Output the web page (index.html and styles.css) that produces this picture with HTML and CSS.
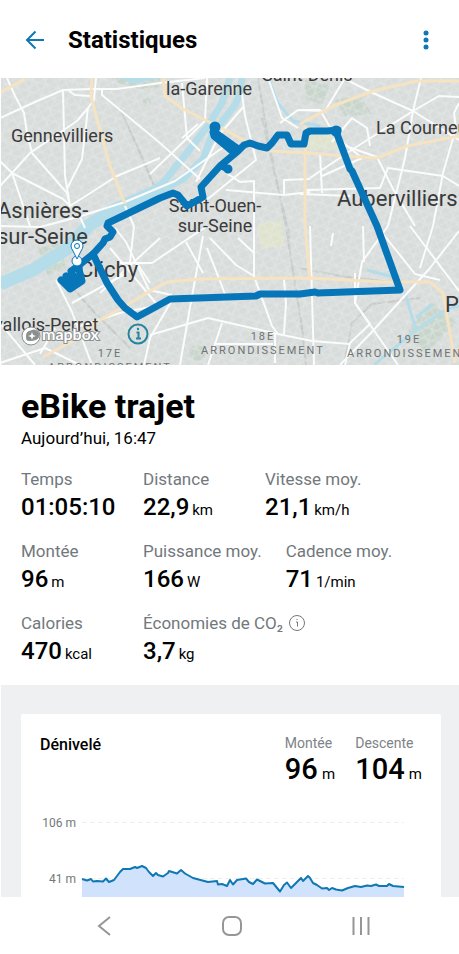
FILE: index.html
```html
<!DOCTYPE html>
<html lang="fr">
<head>
  <meta charset="UTF-8" />
  <meta name="viewport" content="width=device-width, initial-scale=1.0" />
  <title>Statistiques</title>
  <link rel="stylesheet" href="styles.css">
</head>
<body>
  <header class="topbar">
    <button class="icon-btn" aria-label="Retour">
      <svg width="20" height="20" viewBox="0 0 20 20"><path d="M20 10H3M11.500 1.500L3 10l8.500 8.500" /></svg>
    </button>
    <h1 class="topbar-title">Statistiques</h1>
    <button class="icon-btn menu-btn" aria-label="Menu">
      <svg width="6" height="20" viewBox="0 0 6 20"><circle cx="3" cy="3" r="2.500" /><circle cx="3" cy="10" r="2.500" /><circle cx="3" cy="17" r="2.500" /></svg>
    </button>
  </header>

  <main class="content">
    <svg class="map" viewBox="1 0 458 287" role="img" aria-label="Carte du trajet">
      <defs>
        <pattern id="streetsA" width="9" height="7" patternUnits="userSpaceOnUse" patternTransform="rotate(-28)">
          <path d="M0 1H9M2 0V7" class="street" />
        </pattern>
        <pattern id="streetsB" width="13" height="11" patternUnits="userSpaceOnUse" patternTransform="rotate(17)">
          <path d="M0 4H13M6 0V11" class="street" />
        </pattern>
      </defs>
      <rect class="land" x="0" y="0" width="460" height="287" />

      <!-- parks and rail yards -->
      <g class="park">
        <path d="M112 0H160V9L140 11L120 6Z" />
        <path d="M305 2L330 8L322 26L306 22Z" />
        <path d="M335 22L360 18L372 36L345 38Z" />
        <path d="M408 252L432 225L456 244L425 276Z" />
        <path d="M38 170L60 165L66 190L48 198Z" />
        <circle cx="197" cy="275" r="8" />
        <circle cx="147" cy="24" r="4" />
      </g>
      <path class="field" d="M258 146L282 142L284 168L260 171ZM303 55L332 56L340 71L306 72Z" />
      <path class="rail" d="M258 0L268 60L276 100L286 148L294 200L302 250L306 287M262 40L278 110L290 160M120 30L140 75L155 110M68 205L95 235L130 270M344 287L352 245L372 226L420 220M300 190L340 198L400 205" />
      <rect x="0" y="0" width="460" height="287" fill="url(#streetsA)" />
      <rect x="0" y="0" width="460" height="287" fill="url(#streetsB)" />

      <!-- water -->
      <g class="water">
        <path class="seine-arm" d="M230 0L222 25L207 49L190 71L163 105L150 114M242 0L240 15L235 27L212 57L203 81L183 101L165 110" />
        <path class="seine" d="M168 109L150 116L110 134L88 148L67 171L33 192L0 206" />
        <path class="canal" d="M268 0L278 25L293 43L320 48M405 215L416 252L374 287M416 252L447 231L459 228M416 240L432 226M367 192L397 200" />
        <path class="pond" d="M121 1L133 5L150 2L157 0H122Z" />
      </g>

      <!-- secondary roads -->
      <g class="road">
        <path d="M7 0L15 18L24 35L27 55L32 75L67 115L70 128" />
        <path d="M0 40L35 24L63 12L90 11L117 11L160 5L205 0" />
        <path d="M63 12L65 98L70 128M69 13L75 17L90 18M96 0L94 22L88 30L82 81L67 111" />
        <path d="M88 30L77 43L30 75L12 95L0 108M0 83L12 95L30 148M12 95L63 121L70 128L117 98L160 80" />
        <path d="M102 12L102 17L160 65L200 101" />
        <path d="M0 148L40 149L78 139L125 124L175 103L225 68M80 139L85 150M125 128L134 148L130 184" />
        <path d="M182 5L187 60L200 73M207 0L205 43L150 96M198 46L182 60" />
        <path d="M242 16L245 38L256 82L204 124M244 28L220 56L196 104" />
        <path d="M228 96L240 104L254 103L254 192M226 112L284 117L284 102L310 101M284 117L310 114" />
        <path d="M268 0L282 40L298 50M280 45L298 32L325 33L345 0" />
        <path d="M300 32L320 32L340 66L377 79L393 111L415 148M343 0L373 15L413 33L459 62" />
        <path d="M421 0L413 33L405 80L388 148L362 184L355 225L398 287" />
        <path d="M413 33L439 18L459 19M459 25L454 35L456 50L443 95L433 148L420 190M413 33L350 73L310 100" />
        <path d="M306 112L380 110L388 90L443 98L459 108M320 75L322 115M332 64L352 40L367 50L370 68" />
        <path d="M334 57L362 80L322 98M300 116L350 118M363 148L364 184" />
        <path d="M372 142L415 196L440 202M410 148L459 213M459 153L430 190L370 256L340 287" />
        <path d="M310 148L314 287M333 155L331 168M355 195L355 225L370 246L350 265L345 287" />
        <path d="M115 150L126 164L149 212L172 217M120 185L152 185L195 156L208 148M186 164L203 195" />
        <path d="M203 158L189 235L180 287M207 170L225 216M210 160L236 187L254 198L272 248L278 256" />
        <path d="M254 148L254 198M284 201L286 225L284 256M150 257L208 240L278 256L312 263L350 266" />
        <path d="M172 222L150 260L144 287M222 245L208 287M275 256L275 285M216 266L273 266" />
        <path d="M56 202L72 234L92 287M72 225L125 196M100 215L160 160M80 248L120 235L165 226M137 185L150 205M110 170L160 230" />
        <path d="M0 245L35 287M0 285L45 270L80 287M40 276L55 250M238 160L254 175" />
      </g>

      <!-- main roads -->
      <g class="main-road">
        <path d="M1 14L25 1" />
        <path d="M92 0L91 18L97 41L110 88L125 126" />
        <path d="M163 0L165 18L183 31L217 48L250 65L270 73L310 75L343 78L377 80L407 68L459 58" />
        <path d="M300 46L333 28L373 13L417 3L459 3" />
        <path d="M305 48L305 148L310 202" />
        <path d="M43 279L80 259L100 242L127 227L150 213L167 204L200 201L310 200L383 204L430 204L443 215L455 285" />
      </g>

      <g class="place">
        <text x="166" y="17" class="town">la-Garenne</text>
        <text x="262" y="3" class="town">Saint-Denis</text>
        <text x="11" y="64" class="town">Gennevilliers</text>
        <text x="376" y="56" class="town">La Courneuve</text>
        <text x="-3" y="140" class="city">Asnières-</text>
        <text x="-3" y="166" class="city">sur-Seine</text>
        <text x="215" y="134" class="town middle">Saint-Ouen-</text>
        <text x="215" y="154" class="town middle">sur-Seine</text>
        <text x="337" y="128" class="city">Aubervilliers</text>
        <text x="79" y="199" class="city">Clichy</text>
        <text x="445" y="234" class="city">Pantin</text>
        <text x="-6" y="253" class="town">vallois-Perret</text>
      </g>
      <g class="district">
        <text x="110" y="279">17E</text>
        <text x="110" y="293">ARRONDISSEMENT</text>
        <text x="263" y="262">18E</text>
        <text x="263" y="276">ARRONDISSEMENT</text>
        <text x="409" y="265">19E</text>
        <text x="409" y="279">ARRONDISSEMENT</text>
      </g>

      <!-- recorded track -->
      <g class="track">
        <path d="M215 49L213 54L214 58L232 73L238 73L244 67L250 65L258 68L267 70L272 65L278 57L287 57L291 66L304 66L306 55L310 53L327 53L338 52L337 56L350 91L352 93L377 148L400 212L318 215L315 214L300 216L260 216L256 218L170 221L150 232L137 239L125 230L118 222L107 205L93 176L103 165L105 161L110 159L113 154L107 148L108 145L160 120L173 115L178 117L187 128L203 119L201 109L220 88L238 73" />
        <path d="M93 176L78 188L71 193L76 203M78 188L82 203L70 211L61 202M66 198L70 206M216 55L237 70M228 91L222 88" />
        <circle cx="215" cy="49" r="2" /><circle cx="228" cy="91" r="1" /><circle cx="336" cy="53" r="2" />
      </g>

      <g class="pin">
        <circle cx="77" cy="183" r="5" />
        <path d="M77 181L73 173Q71 170 71 168A6 6 0 0 1 83 168Q83 170 81 173Z" />
        <circle cx="77" cy="168" r="2.500" />
      </g>

      <g class="attribution">
        <circle cx="31" cy="258" r="9" />
        <path d="M27 262Q25 253 31 253A5 5 0 1 1 34 262Q31 263 27 262Z" />
        <path class="spark" d="M32 254L33 257L36 258L33 259L32 262L31 259L28 258L31 257Z" />
        <text x="42" y="262">mapbox</text>
      </g>
      <g class="map-info">
        <circle cx="138" cy="256" r="9.500" />
        <path d="M136.500 254.500H138.500V260M136 260.500H141" />
        <circle class="dot" cx="138" cy="251" r="1.200" />
      </g>
    </svg>

    <section class="summary">
      <h2 class="ride-name">eBike trajet</h2>
      <p class="ride-date">Aujourd’hui, 16:47</p>

      <div class="stats">
        <div class="stat-row">
          <div class="stat"><div class="label">Temps</div><div class="value">01:05:10</div></div>
          <div class="stat"><div class="label">Distance</div><div class="value">22,9 <span class="unit">km</span></div></div>
          <div class="stat"><div class="label">Vitesse moy.</div><div class="value">21,1 <span class="unit">km/h</span></div></div>
        </div>
        <div class="stat-row">
          <div class="stat"><div class="label">Montée</div><div class="value">96 <span class="unit">m</span></div></div>
          <div class="stat"><div class="label">Puissance moy.</div><div class="value">166 <span class="unit">W</span></div></div>
          <div class="stat"><div class="label">Cadence moy.</div><div class="value">71 <span class="unit">1/min</span></div></div>
        </div>
        <div class="stat-row">
          <div class="stat"><div class="label">Calories</div><div class="value">470 <span class="unit">kcal</span></div></div>
          <div class="stat">
            <div class="label">Économies de CO₂
              <button class="info-btn" aria-label="Informations CO₂">
                <svg width="16" height="16" viewBox="0 0 16 16"><circle cx="8" cy="8" r="7.500" /><path d="M7 7H8.500V11.500M8 4V5" /></svg>
              </button>
            </div>
            <div class="value">3,7 <span class="unit">kg</span></div>
          </div>
        </div>
      </div>
    </section>

    <section class="details">
      <article class="card">
        <div class="card-head">
          <h3 class="card-title">Dénivelé</h3>
          <div class="totals">
            <div><div class="total-label">Montée</div><div class="total">96 <span class="unit">m</span></div></div>
            <div><div class="total-label">Descente</div><div class="total">104 <span class="unit">m</span></div></div>
          </div>
        </div>
        <svg class="chart" viewBox="0 0 382 140" role="img" aria-label="Profil du dénivelé">
          <path class="grid" d="M42 21.500H364M42 77.500H364" />
          <path class="area" d="M42 78L47 79L51 78L53 81L63 80L66 78L69 81L74 79L80 71L83 68L90 68L95 66L97 67L102 65L106 67L113 75L116 72L118 74L123 75L129 70L137 72L141 69L145 72L153 77L168 81L177 80L178 83L187 85L190 79L193 83L197 79L206 78L209 81L213 83L217 78L225 83L233 82L240 90L247 82L251 87L261 77L263 80L268 75L273 82L282 87L290 88L300 89L308 87L315 85L327 85L336 84L343 85L349 83L353 85L364 86V140H42Z" />
          <path class="line" d="M42 78L47 79.500L51 78L53 80.500L57 80L63 80.500L66 77.500L69 81L74 79L80 71L83 68L90 68L95 66L97 67L102 65L106 67L109 71L113 75L116 72L118 74L123 75.500L128 72L129 70L137 72.500L141 69L145 72.500L153 77L168 81L177 80L178 83.500L182 83L187 85L190 79L193 83.500L197 79L206 77.500L209 81L213 83L217 78.500L225 82.500L233 82L240 90.500L244 84L247 81.500L251 87L255 83L261 77L263 80L268 75L270 77L273 82L277 84L282 87.500L287 87L289 89L292 87L296 88.500L302 89.500L308 87L315 85L321 86L327 84.500L331 85L336 83.500L339 85L347 85L349 83L353 85L364 86" />
          <text x="36" y="26">106 m</text>
          <text x="36" y="82">41 m</text>
        </svg>
      </article>
    </section>
  </main>

  <nav class="navbar">
    <button class="nav-btn" aria-label="Précédent"><svg width="20" height="20" viewBox="0 0 20 20"><path d="M16 1L5 10l11 9" /></svg></button>
    <button class="nav-btn" aria-label="Accueil"><svg width="20" height="20" viewBox="0 0 20 20"><rect x="1" y="1" width="18" height="18" rx="6" /></svg></button>
    <button class="nav-btn" aria-label="Applications récentes"><svg width="20" height="20" viewBox="0 0 20 20"><path d="M2.500 1V19M10 1V19M17.500 1V19" /></svg></button>
  </nav>
</body>
</html>
```
FILE: styles.css
```css
body {
  margin: 0;
  height: 100vh;
  display: flex;
  flex-direction: column;
  background: #fff;
  color: #000;
  font-family: Roboto, "Liberation Sans", sans-serif;
}
h1, h2, h3, p {
  margin: 0;
}
button {
  padding: 0;
  border: none;
  background: none;
  cursor: pointer;
}
svg {
  display: block;
}

/* top bar */
.topbar {
  display: flex;
  align-items: center;
  flex: none;
  height: 78px;
  padding: 2px 20px 0 24px;
  box-sizing: border-box;
}
.icon-btn {
  padding: 4px 0;
}
.icon-btn path {
  fill: none;
  stroke: #0f78b4;
  stroke-width: 2;
}
.icon-btn circle {
  fill: #0f78b4;
}
.topbar-title {
  flex: 1;
  margin-left: 24px;
  font-size: 24px;
  line-height: 28px;
}
.menu-btn {
  padding: 4px 10px;
}

.content {
  flex: 1;
  min-height: 0;
  overflow: hidden;
  margin-left: 1px;
}

/* map */
.map {
  width: 100%;
  height: auto;
}
.land { fill: #d8dcdb; }
.park { fill: #c8d5cb; }
.field { fill: #dfe3cb; }
.street {
  fill: none;
  stroke: #e8ebea;
  stroke-width: 1;
  opacity: 0.5;
}
.rail {
  fill: none;
  stroke: #c6cac9;
  stroke-width: 2;
}
.water path {
  fill: none;
  stroke: #b5dde9;
}
.water .seine { stroke-width: 13; }
.water .seine-arm { stroke-width: 7; }
.water .canal { stroke-width: 3; }
.water .pond { fill: #b5dde9; }
.road {
  fill: none;
  stroke: #fbfcfc;
  stroke-width: 2;
  stroke-linejoin: round;
}
.main-road {
  fill: none;
  stroke: #f6e3c2;
  stroke-width: 3;
  stroke-linejoin: round;
}
.place text {
  fill: #3a3a3a;
}
.place .town { font-size: 18px; }
.place .city { font-size: 22px; }
.place .middle { text-anchor: middle; }
.district {
  fill: #6f7373;
  font-size: 11px;
  letter-spacing: 2px;
  text-anchor: middle;
}
.track {
  fill: none;
  stroke: #0776b9;
  stroke-width: 7;
  stroke-linecap: round;
  stroke-linejoin: round;
}
.pin {
  fill: #fff;
  stroke: #0776b9;
  stroke-width: 1;
}
.attribution {
  fill: #fff;
  stroke: #8b8f8f;
  stroke-width: 1;
}
.attribution path {
  fill: #8b8f8f;
}
.attribution .spark {
  fill: #fff;
  stroke: none;
}
.attribution text {
  font-family: Lato, sans-serif;
  font-size: 16px;
  font-weight: 700;
  stroke-width: 2;
  paint-order: stroke;
}
.map-info {
  fill: none;
  stroke: #26849f;
  stroke-width: 2;
}
.map-info .dot {
  fill: #26849f;
  stroke: none;
}

/* ride summary */
.summary {
  padding: 20px 20px 18px;
}
.ride-name {
  font-size: 34px;
  line-height: 42px;
}
.ride-date {
  font-size: 17px;
  line-height: 22px;
}
.stats {
  display: flex;
  flex-direction: column;
  gap: 18px;
  margin-top: 20px;
}
.stat-row {
  display: flex;
  gap: 24px;
}
.stat {
  min-width: 98px;
}
.label {
  display: flex;
  align-items: center;
  gap: 6px;
  color: #72787c;
  font-size: 17px;
  line-height: 20px;
}
.value {
  margin-top: 2px;
  font-size: 24px;
  font-weight: 500;
  line-height: 32px;
}
.unit {
  margin-left: -3px;
  font-size: 15px;
  font-weight: 400;
  line-height: 1;
}
.info-btn svg {
  fill: none;
  stroke: #72787c;
  stroke-width: 1;
}

/* detail cards */
.details {
  padding: 29px 18px 29px 20px;
  background: #eef0f2;
}
.card {
  padding: 19px 19px 0;
  background: #fff;
  border-radius: 2px;
}
.card-head {
  display: flex;
  justify-content: space-between;
}
.card-title {
  font-size: 16px;
  font-weight: 500;
  line-height: 24px;
}
.totals {
  display: flex;
  gap: 20px;
}
.total-label {
  color: #7d8387;
  font-size: 14px;
  line-height: 20px;
}
.total {
  font-size: 29px;
  font-weight: 500;
  line-height: 32px;
}
.chart {
  width: 100%;
  height: auto;
  margin-top: 16px;
}
.chart text {
  fill: #72787c;
  font-size: 12px;
  text-anchor: end;
}
.grid {
  stroke: #eceeef;
  stroke-width: 1;
  stroke-dasharray: 5 3;
}
.area { fill: #d0e2fc; }
.line {
  fill: none;
  stroke: #0f78b4;
  stroke-width: 2;
  stroke-linejoin: round;
}

/* system navigation */
.navbar {
  display: flex;
  flex: none;
  justify-content: space-around;
  height: 57px;
  padding: 0 34px 0 40px;
}
.nav-btn {
  padding: 0 12px;
}
.nav-btn svg {
  fill: none;
  stroke: #969696;
  stroke-width: 2;
}
```
